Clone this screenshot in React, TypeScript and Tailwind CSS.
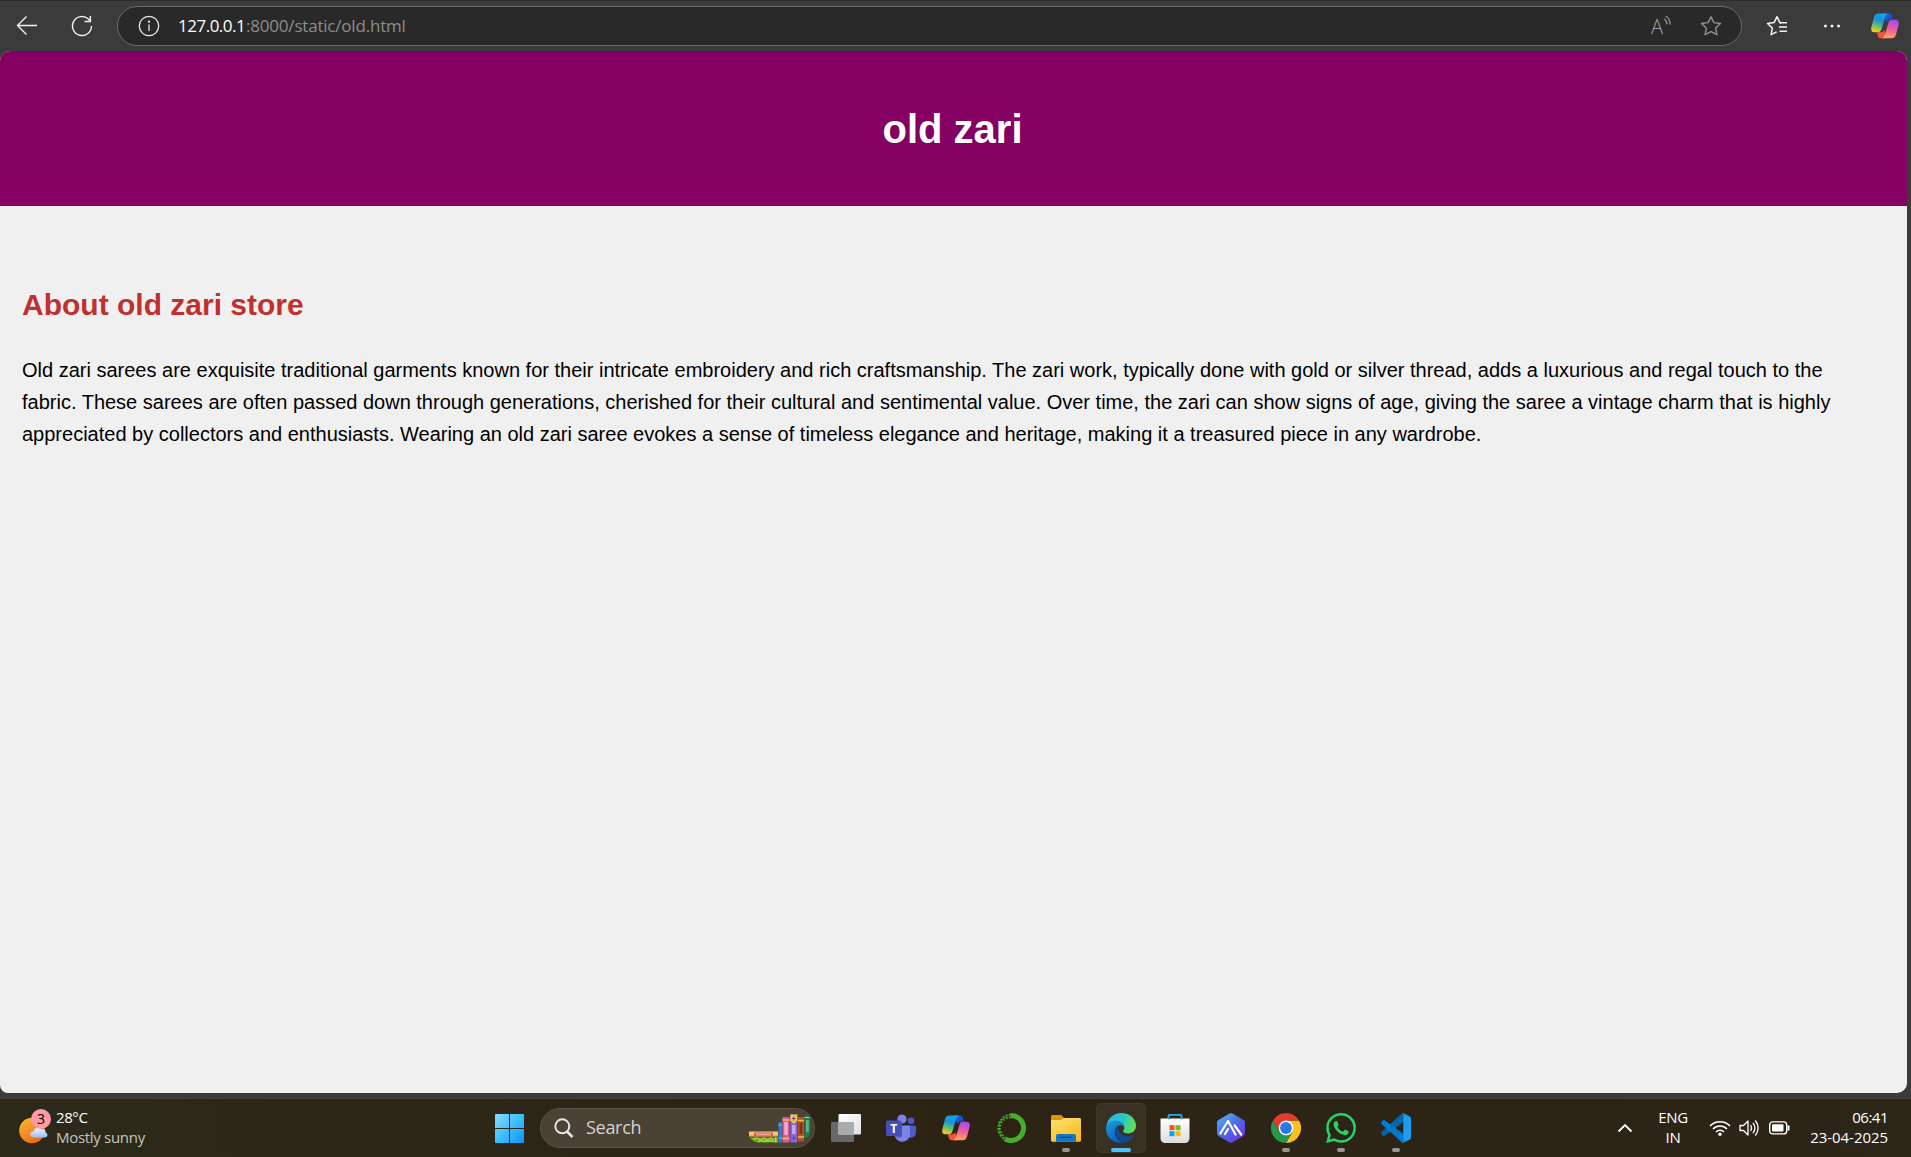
import type { ReactNode } from "react";

const UI = "font-['Open_Sans','Noto_Sans',sans-serif]";

function CopilotIcon({ id, size }: { id: string; size: number }) {
  return (
    <svg width={size} height={size} viewBox="0 0 28 28">
      <defs>
        <linearGradient id={id + "a"} x1="0.6" y1="0" x2="0.3" y2="1">
          <stop offset="0" stopColor="#15a5f0" />
          <stop offset="0.35" stopColor="#1592d8" />
          <stop offset="0.65" stopColor="#5fb87a" />
          <stop offset="1" stopColor="#f6d013" />
        </linearGradient>
        <linearGradient id={id + "b"} x1="0.6" y1="0" x2="0.4" y2="1">
          <stop offset="0" stopColor="#a04df0" />
          <stop offset="0.5" stopColor="#ee5c9c" />
          <stop offset="1" stopColor="#ffa45c" />
        </linearGradient>
        <linearGradient id={id + "c"} x1="0" y1="0" x2="1" y2="1">
          <stop offset="0" stopColor="#1b6fe6" />
          <stop offset="1" stopColor="#1537b4" />
        </linearGradient>
      </defs>
      <path d="M13 1.5h5.2c1.6 0 2.3.9 2.8 2.4l1.1 3.8h-3.6c-1.8 0-2.8 1-3.4 2.8z" fill={`url(#${id}c)`} />
      <path d="M15 26.3H9.8c-1.6 0-2.4-.9-2.9-2.4l-1.1-3.7h4.1c1.8 0 2.7-1 3.2-2.8z" fill="#f4553b" />
      <path d="M7 1.5h10c-1.6.5-2.3 2-2.9 4l-3.5 11.6c-.6 2-1.6 3.1-3.6 3.1H3.5C.6 20.2-.3 18 .4 15.2L3 5C3.700 2.700 5 1.500 7 1.500z" fill={`url(#${id}a)`} />
      <path d="M21 26.300H11c1.600-.5 2.300-2 2.900-4l3.500-11.400c.6-2 1.600-3.200 3.600-3.200h3.500c2.900 0 3.800 2.200 3.100 5L25 22.800c-.7 2.300-2 3.500-4 3.500z" fill={`url(#${id}b)`} />
    </svg>
  );
}

function BrowserBar() {
  return (
    <div className={`flex h-[51px] items-start border-t border-[#2c2c2c] bg-[#3b3b3b] pt-[5px] ${UI}`}>
      <div className="flex h-10 w-[117px] items-center">
        <svg className="ml-[16px]" width="22" height="22" viewBox="0 0 22 22" fill="none" stroke="#f2f2f2" strokeWidth="1.4">
          <path d="M21 10.500H1.500M10.500 1.500L1.500 10.500L10.500 19.500" />
        </svg>
        <svg className="ml-[33px]" width="22" height="22" viewBox="0 0 22 22" fill="none" stroke="#f2f2f2" strokeWidth="1.4">
          <path d="M20.500 11a9.500 9.500 0 1 1-3.300-7.200L19.300 5.700M19.400 1v5.500H13.500" />
        </svg>
      </div>
      <div className="flex h-10 w-[1625px] items-center rounded-full border border-[#6a6a6a] bg-[#292929] pl-[20px]">
        <svg width="22" height="22" viewBox="0 0 22 22" fill="none" stroke="#e8e8e8" strokeWidth="1.300">
          <circle cx="11" cy="11" r="9.700" />
          <path d="M11 9.500v6.500" />
          <circle cx="11" cy="6.700" r=".5" fill="#e8e8e8" />
        </svg>
        <div className="ml-[18px] flex h-10 items-center whitespace-pre text-[17px] leading-10 text-[#8d8d8d]">
          <span className="w-[68px] tracking-[-0.500px] text-white">127.0.0.1</span>
          <span className="tracking-[-0.200px]">:8000/static/old.html</span>
        </div>
        <div className="ml-auto flex h-[22px] w-[22px] text-[#a0a0a0]">
          <span className="w-[12px] text-[20px] font-light leading-[24px]">A</span>
          <svg width="8" height="12" viewBox="0 0 8 12" fill="none" stroke="#929292" strokeWidth="1.300">
            <path d="M1 4c1.800 1 2.800 2.700 2.900 5.200M2.500 1c3 1.500 4.600 4.700 4.600 8.800" />
          </svg>
        </div>
        <svg className="ml-[27px] mr-[19px]" width="22" height="22" viewBox="0 0 22 22" fill="none" stroke="#929292" strokeWidth="1.400" strokeLinejoin="round">
          <path d="M11 1.700l2.900 5.900 6.600.9-4.800 4.600 1.200 6.600L11 16.600l-5.900 3.100 1.200-6.600-4.800-4.600 6.600-.9z" />
        </svg>
      </div>
      <div className="flex h-10 flex-1 items-center">
        <svg className="ml-[24px]" width="22" height="22" viewBox="0 0 22 22" fill="none" stroke="#f2f2f2" strokeWidth="1.500" strokeLinejoin="round">
          <path d="M15.500 7.900l-1.600-.3L11 1.700 8.100 7.600l-6.600.9 4.800 4.600-1.200 6.600L10.700 16.800" />
          <path d="M13.500 7.800h7.500M13 12h8M13.500 16.200h7.500" />
        </svg>
        <svg className="ml-[34px]" width="20" height="6" viewBox="0 0 20 6" fill="#f2f2f2">
          <circle cx="3.500" cy="3" r="1.500" />
          <circle cx="10" cy="3" r="1.500" />
          <circle cx="16.500" cy="3" r="1.500" />
        </svg>
        <div className="ml-[29px]">
          <CopilotIcon id="top" size={28} />
        </div>
      </div>
    </div>
  );
}

function Page() {
  return (
    <div className="h-[1047px] bg-[#3b3b3b] font-['Liberation_Sans',Arial,sans-serif]">
      <div className="h-[1042px] w-[1907px] overflow-hidden rounded-[10px] rounded-bl-[8px] bg-[#f0f0f0]">
        <header className="flex h-[155px] justify-center bg-[#850063] pt-[52px]">
          <h1 className="relative left-[-1px] text-[40px] font-bold leading-[52px] text-white">old zari</h1>
        </header>
        <main className="px-[22px] pt-[75px] text-black">
          <h2 className="text-[30px] font-bold leading-[48px] text-[#c03030]">About old zari store</h2>
          <p className="mt-[25px] whitespace-nowrap text-[20px] leading-8">
            Old zari sarees are exquisite traditional garments known for their intricate embroidery and rich craftsmanship. The zari work, typically done with gold or silver thread, adds a luxurious and regal touch to the
            <br />
            fabric. These sarees are often passed down through generations, cherished for their cultural and sentimental value. Over time, the zari can show signs of age, giving the saree a vintage charm that is highly
            <br />
            appreciated by collectors and enthusiasts. Wearing an old zari saree evokes a sense of timeless elegance and heritage, making it a treasured piece in any wardrobe.
          </p>
        </main>
      </div>
    </div>
  );
}

function Books() {
  return (
    <svg width="62" height="30" viewBox="0 0 62 30">
      <path d="M0 18.500h29v4H0z" fill="#f0b548" />
      <path d="M0 17.500h29v3H0z" fill="#f7cb5c" />
      <rect x="5" y="18.500" width="19" height="4" rx="1" fill="#c55e64" />
      <rect x="7" y="19.300" width="15" height="2.200" fill="#f49b94" />
      <path d="M1 23.500h28v5H9c-4-.3-7-2.500-8-5z" fill="#64a51d" />
      <path d="M4 25l4-1 3 2 4-2 3 2 4-2 3 2M9 28l3-1.500 4 1 5-1 4 1" stroke="#a3d83b" strokeWidth="1.300" fill="none" />
      <rect x="26" y="23.500" width="1.500" height="5" fill="#e8cf58" />
      <rect x="29.500" y="8" width="3.500" height="20.500" fill="#2f79dd" />
      <path d="M29.500 11h3.500M29.500 24h3.500" stroke="#7fc0ff" />
      <rect x="33.500" y="3" width="7" height="25.500" rx=".8" fill="#d65b99" />
      <rect x="35.300" y="8" width="3.500" height="13" fill="#f8a6cc" />
      <path d="M33.500 6h7M33.500 24.500h7" stroke="#f7c06b" strokeWidth="1.500" />
      <rect x="41.300" y="0.500" width="7" height="28" rx=".8" fill="#8964d3" />
      <rect x="43" y="11" width="3.500" height="9" fill="#c3a8f4" />
      <path d="M41.300.5h7v6l-3.500 3.500-3.500-3.500z" fill="#f6c83f" />
      <path d="M44.800 2.500v4M43 4.500h3.500M44.800 22.500v3.500M43.300 24.300h3" stroke="#5d40a8" />
      <rect x="49" y="3" width="6" height="24.500" fill="#b45425" />
      <rect x="50.500" y="9" width="3" height="11" fill="#7f3516" />
      <path d="M49 6.500h6M49 23h6" stroke="#f4ba55" strokeWidth="1.500" />
      <path d="M55.500 1.500c3-1 5.500 1 5.800 4v13c-.5 3-2.500 5-5.800 6.500z" fill="#257b4d" />
      <rect x="57" y="6" width="2.800" height="12" fill="#58b480" />
      <path d="M55.500 3.500h5" stroke="#e3c465" />
    </svg>
  );
}

function Cell({ children, mark }: { children: ReactNode; mark?: "dot" | "bar" }) {
  return (
    <div className="flex w-[55px] justify-center">
      <div className={mark === "bar" ? "relative flex size-[50px] items-center justify-center rounded-[5px] border border-[#41392b] bg-[#393124]" : "relative flex size-[50px] items-center justify-center"}>
        {children}
        {mark === "dot" && <span className="absolute bottom-[1px] left-[21px] h-1 w-2 rounded-full bg-[#9c978e]" />}
        {mark === "bar" && <span className="absolute bottom-0 left-[14px] h-1 w-5 rounded-full bg-[#4cc2ff]" />}
      </div>
    </div>
  );
}

function TaskbarApps() {
  return (
    <>
      <Cell>
        <svg width="30" height="30" viewBox="0 0 30 30">
          <defs><linearGradient id="tv" x1="0" y1="0" x2="1" y2="1"><stop stopColor="#fff" /><stop offset="1" stopColor="#dfe0e3" /></linearGradient></defs>
          <rect x="0" y="9" width="23" height="20" rx="1" fill="#686868" />
          <rect x="7.500" y="1" width="22.500" height="20.500" rx="1" fill="url(#tv)" />
          <path d="M7.500 9H22a1 1 0 0 1 1 1v11.500H7.500z" fill="#ababab" />
        </svg>
      </Cell>
      <Cell>
        <svg width="30" height="30" viewBox="0 0 30 30">
          <circle cx="25" cy="7.700" r="3.300" fill="#5059c9" />
          <path d="M20 12.500h8.500c.8 0 1.500.7 1.500 1.500v5.500a5.500 5.500 0 0 1-9 4z" fill="#5059c9" />
          <circle cx="16" cy="6" r="4.600" fill="#7b83eb" />
          <path d="M9 12.500h13.500c.8 0 1.500.7 1.500 1.500v7a7.700 7.700 0 0 1-15.500 0z" fill="#7b83eb" />
          <path d="M9 12.500h7v12H10a8 8 0 0 1-1-4z" fill="#595fc4" />
          <rect x="0" y="7.500" width="15.500" height="15.500" rx="1.500" fill="#464eb8" />
          <text x="7.750" y="19.500" textAnchor="middle" fontSize="12" fontWeight="700" fontFamily="Open Sans" fill="#fff">T</text>
        </svg>
      </Cell>
      <Cell><CopilotIcon id="task" size={28} /></Cell>
      <Cell>
        <svg width="30" height="30" viewBox="0 0 30 30" fill="none" stroke="#43b02a">
          <path d="M15 2.500a12.500 12.500 0 1 1-6.200 23.300" strokeWidth="5" />
          <path d="M15 1.500A13.500 13.500 0 0 0 8 26" strokeWidth="1.800" strokeDasharray="2.200 1.200" />
          <path d="M15 4.500A10.500 10.500 0 0 0 9 24" strokeWidth="1.800" strokeDasharray="1.800 1.600" />
          <path d="M14 3A12 12 0 0 0 8.500 25" strokeWidth="1" strokeDasharray="1.500 2" />
        </svg>
      </Cell>
      <Cell mark="dot">
        <svg width="30" height="30" viewBox="0 0 30 30">
          <defs><linearGradient id="fo" x1="0" y1="0" x2=".6" y2="1"><stop stopColor="#ffe17a" /><stop offset="1" stopColor="#f9bd18" /></linearGradient></defs>
          <path d="M0 3.500C0 2.500.7 2 1.500 2h8c.7 0 1.200.3 1.600.8L13 5v5H0z" fill="#dd9405" />
          <path d="M0 7h9.500L13 5h15.500c.8 0 1.500.7 1.500 1.500V27c0 1-.5 1.700-1.500 1.700h-27C.5 28.700 0 28 0 27z" fill="url(#fo)" />
          <path d="M5 28.700V23c0-1.200.8-2 2-2h16c1.200 0 2 .8 2 2v5.700z" fill="#1377c8" />
          <path d="M8.500 24.300h13" stroke="#0b4f8f" strokeWidth="1.300" />
        </svg>
      </Cell>
      <Cell mark="bar">
        <svg width="30" height="30" viewBox="0 0 30 30">
          <defs>
            <linearGradient id="eg1" x1="0" y1=".3" x2="1" y2=".5"><stop stopColor="#2bb4e8" /><stop offset=".55" stopColor="#2dc5c4" /><stop offset="1" stopColor="#6be04c" /></linearGradient>
            <linearGradient id="eg2" x1="0" y1="0" x2=".4" y2="1"><stop stopColor="#1f9de2" /><stop offset="1" stopColor="#0861bd" /></linearGradient>
          </defs>
          <path d="M.3 14C1.200 5.500 7.500 0 15.300 0 24 0 30 6 30 12.800c0 4.400-3.300 7.700-7.800 7.700-3.500 0-5.200-1.200-5.200-2.300 0-.8 1.300-1.300 1.300-3.500C18.300 10.500 14 8 9.500 8 5 8 1.500 10.500.3 14z" fill="url(#eg1)" />
          <path d="M.1 15C.8 10 4.800 7.500 9.500 7.500c5.500 0 8.700 3.500 8.800 6.700-1-1.400-2-2-3.800-2-4 0-6.500 4-5.500 8.500 1 4.700 4.300 8.300 8.500 9C8 31-.7 24.500.1 15z" fill="url(#eg2)" />
          <path d="M12 12.700c-3 1.800-4 5-3 8.500 1.300 5 5.600 8.400 10 8.300 3.700-.8 7-3.300 8.700-6.500.3-.7-.2-1-.8-.7-4.500 2.200-10.500 1-13-2.800-1.700-2.500-2.400-4.800-1.900-6.800z" fill="#104a91" />
        </svg>
      </Cell>
      <Cell>
        <svg className="mr-px" width="30" height="30" viewBox="0 0 30 30">
          <defs><linearGradient id="ms" x1="0" y1="0" x2="0" y2="1"><stop stopColor="#fff" /><stop offset="1" stopColor="#dcdcdc" /></linearGradient></defs>
          <path d="M8.500 7V2.800c0-.6.400-1 1-1h11c.6 0 1 .4 1 1V7" fill="none" stroke="#29a8ea" strokeWidth="1.800" />
          <path d="M.5 5.500h29V25c0 3-2 5-5 5h-19c-3 0-5-2-5-5z" fill="url(#ms)" />
          <path d="M8 5.500h2M20.500 5.500h2" stroke="#168bd1" strokeWidth="1.600" />
          <path d="M9.500 12.200h5v5h-5z" fill="#f25022" /><path d="M15.500 12.200h5v5h-5z" fill="#7fba00" />
          <path d="M9.500 18.200h5v5h-5z" fill="#00a4ef" /><path d="M15.500 18.200h5v5h-5z" fill="#ffb900" />
        </svg>
      </Cell>
      <Cell>
        <svg width="30" height="30" viewBox="0 0 30 30">
          <defs><linearGradient id="hx" x1="0" y1="0" x2=".8" y2="1"><stop stopColor="#55bdf7" /><stop offset=".5" stopColor="#4b6ee8" /><stop offset="1" stopColor="#6d2fe0" /></linearGradient></defs>
          <path d="M13.500.5q1.500-.8 3 0L27.500 7q1.500.9 1.500 2.500v11q0 1.600-1.500 2.500L16.500 29.500q-1.500.8-3 0L2.500 23Q1 22.100 1 20.500v-11Q1 7.900 2.500 7z" fill="url(#hx)" />
          <path d="M4.300 20.500L12 8l7.500 13.500M9 21l3-5M18.700 12.500l6.500 9" fill="none" stroke="#fff" strokeWidth="2.200" strokeLinecap="round" strokeLinejoin="round" />
        </svg>
      </Cell>
      <Cell mark="dot">
        <svg width="30" height="30" viewBox="0 0 30 30">
          <path d="M15 7.500h13A15 15 0 0 1 15 30l6.500-11.200z" fill="#fcc21b" />
          <path d="M2 7.500l6.500 11.300A7.500 7.500 0 0 0 21.500 18.800L15 30A15 15 0 0 1 2 7.500z" fill="#279847" />
          <path d="M15 0A15 15 0 0 0 2 7.500l6.500 11 6.500-11h13A15 15 0 0 0 15 0z" fill="#e33b2e" />
          <circle cx="15" cy="15" r="7.400" fill="#fff" /><circle cx="15" cy="15" r="5.900" fill="#2979ea" />
        </svg>
      </Cell>
      <Cell mark="dot">
        <svg width="30" height="30" viewBox="0 0 24 24" fill="#25d366">
          <path d="M17.472 14.382c-.297-.149-1.758-.867-2.030-.967-.273-.099-.471-.148-.670.150-.197.297-.767.966-.940 1.164-.173.199-.347.223-.644.075-.297-.150-1.255-.463-2.390-1.475-.883-.788-1.480-1.761-1.653-2.059-.173-.297-.018-.458.130-.606.134-.133.298-.347.446-.520.149-.174.198-.298.298-.497.099-.198.050-.371-.025-.520-.075-.149-.669-1.612-.916-2.207-.242-.579-.487-.5-.669-.51-.173-.008-.371-.010-.570-.010-.198 0-.520.074-.792.372-.272.297-1.040 1.016-1.040 2.479 0 1.462 1.065 2.875 1.213 3.074.149.198 2.096 3.200 5.077 4.487.709.306 1.262.489 1.694.625.712.227 1.360.195 1.871.118.571-.085 1.758-.719 2.006-1.413.248-.694.248-1.289.173-1.413-.074-.124-.272-.198-.570-.347m-5.421 7.403h-.004a9.870 9.870 0 01-5.031-1.378l-.361-.214-3.741.982.998-3.648-.235-.374a9.860 9.860 0 01-1.510-5.260c.001-5.450 4.436-9.884 9.888-9.884 2.640 0 5.122 1.030 6.988 2.898a9.825 9.825 0 012.893 6.994c-.003 5.450-4.437 9.884-9.885 9.884m8.413-18.297A11.815 11.815 0 0012.050 0C5.495 0 .160 5.335.157 11.892c0 2.096.547 4.142 1.588 5.945L.057 24l6.305-1.654a11.882 11.882 0 005.683 1.448h.005c6.554 0 11.890-5.335 11.893-11.893a11.821 11.821 0 00-3.480-8.413z" />
        </svg>
      </Cell>
      <Cell mark="dot">
        <svg width="30" height="30" viewBox="0 0 30 30">
          <path d="M1 21.500l-.7-.8c-.4-.5-.4-1.200.1-1.700L21.500 0l2.200 8.200L3.700 22.800c-.5.4-1.200.4-1.700 0z" fill="#0065a9" />
          <path d="M1 8.500l-.7.8c-.4.5-.4 1.200.1 1.700L21.500 30l2.200-8.200L3.700 7.200c-.5-.4-1.200-.4-1.700 0z" fill="#007acc" />
          <path d="M21.500 30c-.7 0-1.300-.3-1.700-.7.900.9 2.500.300 2.500-1V1.700c0-1.300-1.600-1.900-2.500-1 .6-.7 1.500-.9 2.400-.5l6.200 3c.9.400 1.600 1.300 1.600 2.300v19c0 1-.7 1.900-1.600 2.300z" fill="#1f9cf0" />
        </svg>
      </Cell>
    </>
  );
}

function Taskbar() {
  return (
    <div className={`flex h-[59px] items-center border-t border-[#464033] bg-linear-to-r from-[#2b2a1a] via-[#2c2315] to-[#2c2618] ${UI}`}>
      <div className="flex w-[482px] items-center pb-[3px]">
        <div className="relative ml-[19px] h-[36px] w-[34px]">
          <svg width="34" height="36" viewBox="0 0 34 36">
            <defs>
              <linearGradient id="sun" x1="0" y1="0" x2=".6" y2="1"><stop stopColor="#f7bd36" /><stop offset="1" stopColor="#ed6b12" /></linearGradient>
              <linearGradient id="cl" x1="0" y1="0" x2="0" y2="1"><stop stopColor="#eef5ff" /><stop offset="1" stopColor="#9dbcf2" /></linearGradient>
            </defs>
            <circle cx="13" cy="21.500" r="12.800" fill="url(#sun)" />
            <path d="M14 29c-5 0-5-6-.5-6 .5-4 6-5 8-2 3-1 4.500 1 4 3 3 1 2.500 5-1 5z" transform="translate(1 -.5)" fill="url(#cl)" />
          </svg>
          <span className="absolute left-[12px] top-0 flex size-5 items-center justify-center rounded-full bg-[#ff99a4] text-[14px] text-black">3</span>
        </div>
        <div className="ml-[3px] text-[15px] leading-5">
          <div className="tracking-[-0.400px] text-white">28°C</div>
          <div className="tracking-[-0.300px] text-[#c9c5bf]">Mostly sunny</div>
        </div>
      </div>
      <Cell>
        <svg width="29" height="29" viewBox="0 0 29 29">
          <defs><linearGradient id="win" x1="0" y1="0" x2="1" y2="1"><stop stopColor="#85dcff" /><stop offset=".5" stopColor="#3fbefc" /><stop offset="1" stopColor="#0c94f8" /></linearGradient></defs>
          <path d="M1 0h13v14H0V1q0-1 1-1zM15 0h13q1 0 1 1v13H15zM0 15h14v14H1q-1 0-1-1zM15 15h14v13q0 1-1 1H15z" fill="url(#win)" />
        </svg>
      </Cell>
      <div className="ml-[3px] flex h-10 w-[275px] items-center rounded-full border border-[#5c5446] bg-[#4a4234] pl-[13px] pr-[3px]">
        <svg className="-mt-px" width="20" height="20" viewBox="0 0 20 20" fill="none" stroke="#e6e6e8" strokeWidth="2">
          <circle cx="8.300" cy="8.300" r="7" /><path d="M13 13.500l5.500 5.500" strokeWidth="2.500" />
        </svg>
        <span className="-mt-px ml-[12px] text-[18px] tracking-[-0.300px] text-[#d6d3ce]">Search</span>
        <div className="ml-auto mt-[2px]"><Books /></div>
      </div>
      <div className="ml-[3px] flex"><TaskbarApps /></div>
      <div className="ml-auto flex items-center text-[15px] leading-5 text-white">
        <svg width="16" height="10" viewBox="0 0 16 10" fill="none" stroke="#fff" strokeWidth="1.800"><path d="M1.500 8.500L8 2l6.500 6.500" /></svg>
        <div className="ml-[24px] w-[32px] pb-[2px] text-center tracking-[-0.300px]">ENG<br />IN</div>
        <svg className="ml-[20px]" width="22" height="18" viewBox="0 0 22 18" fill="none" stroke="#fff" strokeWidth="1.500">
          <path d="M1 7a14 14 0 0 1 20 0M4 10a9.800 9.800 0 0 1 14 0M7 13a5.600 5.600 0 0 1 8 0" />
          <circle cx="11" cy="15.200" r="1.700" fill="#fff" stroke="none" />
        </svg>
        <svg className="ml-[8px]" width="21" height="18" viewBox="0 0 21 18" fill="none" stroke="#fff" strokeWidth="1.300" strokeLinejoin="round">
          <path d="M1 6.500h3.500L9 2v14l-4.500-4.500H1z" />
          <path d="M11.500 6q2 3 0 6M14 3.800q3.800 5.200 0 10.400M16.300 1.500q5.600 7.500 0 15" />
        </svg>
        <svg className="ml-[9px]" width="21" height="14" viewBox="0 0 21 14" fill="none" stroke="#fff" strokeWidth="1.400">
          <rect x=".7" y=".9" width="17" height="12" rx="3" /><rect x="3" y="3.200" width="11.500" height="7.400" rx="1" fill="#fff" stroke="none" /><path d="M19.500 4.500v5" strokeWidth="2" />
        </svg>
        <div className="ml-[20px] mr-[23px] w-[78px] whitespace-nowrap pb-[3px] text-right">
          <div className="tracking-[-0.500px]">06:41</div>
          <div className="tracking-[-0.050px]">23-04-2025</div>
        </div>
      </div>
    </div>
  );
}

export default function App() {
  return (
    <div className="h-[1157px] w-[1911px] overflow-hidden">
      <BrowserBar />
      <Page />
      <Taskbar />
    </div>
  );
}
